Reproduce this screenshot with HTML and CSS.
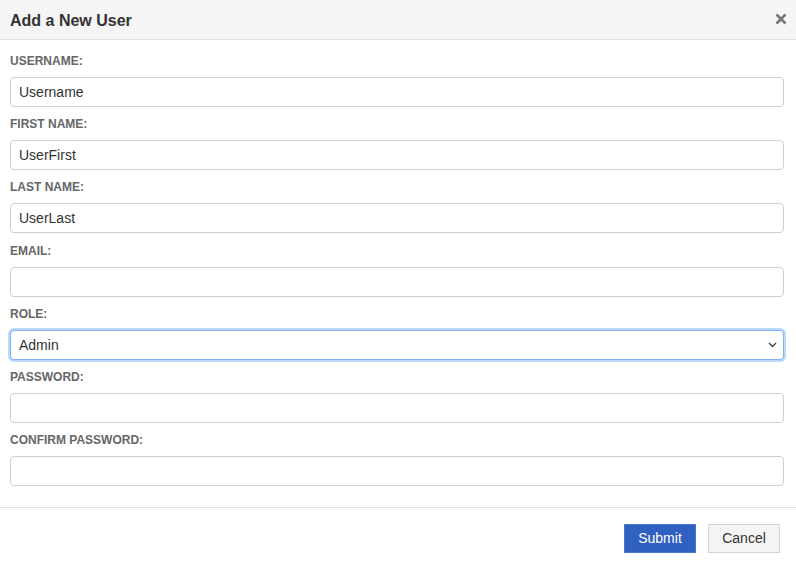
FILE: index.html
```html
<!DOCTYPE html>
<html>
<head>
<meta charset="utf-8">
<link rel="stylesheet" href="styles.css">
</head>
<body>
<div class="dialog">
  <div class="header">
    <h1 class="title">Add a New User</h1>
    <button class="close" aria-label="Close">
      <svg width="12" height="12" viewBox="0 0 12 12"><path d="M1.5 1.5 L10.5 10.5 M10.5 1.5 L1.5 10.5" stroke="#777" stroke-width="2.6" stroke-linecap="butt"/></svg>
    </button>
  </div>
  <form class="body">
    <div class="group">
      <label class="label">USERNAME:</label>
      <input class="field" type="text" value="Username">
    </div>
    <div class="group">
      <label class="label">FIRST NAME:</label>
      <input class="field" type="text" value="UserFirst">
    </div>
    <div class="group">
      <label class="label">LAST NAME:</label>
      <input class="field" type="text" value="UserLast">
    </div>
    <div class="group">
      <label class="label">EMAIL:</label>
      <input class="field" type="text" value="">
    </div>
    <div class="group">
      <label class="label">ROLE:</label>
      <div class="select focused">
        <span>Admin</span>
        <svg class="chev" width="9" height="6" viewBox="0 0 9 6"><path d="M1 1 L4.5 4.5 L8 1" fill="none" stroke="#444" stroke-width="1.4"/></svg>
      </div>
    </div>
    <div class="group">
      <label class="label">PASSWORD:</label>
      <input class="field" type="password" value="">
    </div>
    <div class="group">
      <label class="label">CONFIRM PASSWORD:</label>
      <input class="field" type="password" value="">
    </div>
  </form>
  <div class="footer">
    <button class="btn primary">Submit</button>
    <button class="btn secondary">Cancel</button>
  </div>
</div>
</body>
</html>
```
FILE: styles.css
```css
html, body {
  margin: 0;
  padding: 0;
  background: #fff;
  font-family: "Liberation Sans", Arial, sans-serif;
  color: #333;
}
.dialog {
  width: 796px;
}
.header {
  height: 39px;
  background: #f5f5f5;
  border-bottom: 1px solid #e2e2e2;
  display: flex;
  align-items: center;
  justify-content: space-between;
  padding: 0 9px 0 10px;
  box-sizing: content-box;
}
.title {
  margin: 2px 0 0 0;
  font-size: 16px;
  font-weight: bold;
  color: #333;
}
.close {
  border: 0;
  background: none;
  padding: 0;
  width: 12px;
  height: 12px;
  display: flex;
  margin-top: -2px;
}
.body {
  padding: 3.8px 12px 0 10px;
  margin: 0;
}
.group {
  display: flex;
  flex-direction: column;
  margin-top: 10.2px;
}
.label {
  font-size: 12px;
  font-weight: bold;
  line-height: 14px;
  color: #666;
  margin-bottom: 9px;
}
.field, .select {
  box-sizing: border-box;
  height: 30px;
  width: 100%;
  border: 1px solid #ccd0d6;
  border-radius: 4px;
  padding: 0 8px;
  font-family: "Liberation Sans", Arial, sans-serif;
  font-size: 14px;
  color: #333;
  background: #fff;
  outline: none;
  margin: 0;
}
.select {
  display: flex;
  align-items: center;
  justify-content: space-between;
}
.select.focused {
  border-color: #7fb0ee;
  box-shadow: 0 0 0 2px #bcd8fa;
}
.chev {
  margin-right: -2px;
}
.footer {
  margin-top: 20.5px;
  border-top: 1px solid #e2e2e2;
  display: flex;
  justify-content: flex-end;
  gap: 12px;
  padding: 16px 16px 0 0;
}
.btn {
  box-sizing: border-box;
  height: 29px;
  width: 72px;
  font-family: "Liberation Sans", Arial, sans-serif;
  font-size: 14px;
  border-radius: 0;
  padding: 0;
}
.primary {
  background: #3060c0;
  border: 1px solid #4a75cc;
  color: #fff;
}
.secondary {
  background: #f4f4f4;
  border: 1px solid #d4d4d4;
  color: #333;
}
```
